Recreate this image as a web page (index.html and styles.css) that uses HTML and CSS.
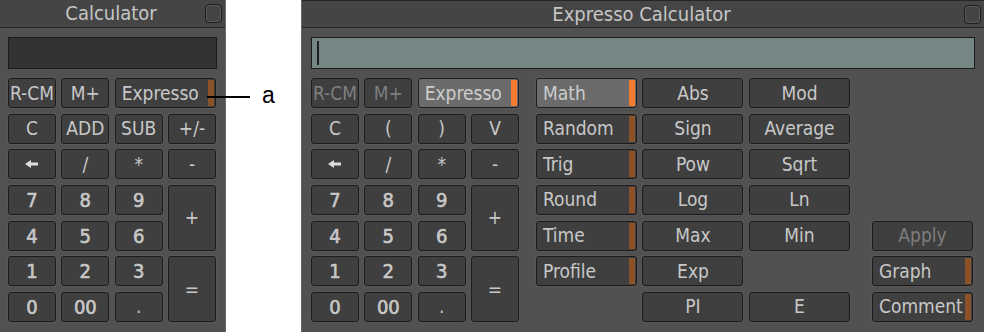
FILE: index.html
```html
<!DOCTYPE html>
<html>
<head>
<meta charset="utf-8">
<link rel="stylesheet" href="styles.css">
</head>
<body>
<div class="page">
  <section class="panel panel-small">
    <header class="titlebar">
      <span></span>
      <span class="title">Calculator</span>
      <span class="closebox"></span>
    </header>
    <div class="body">
      <div class="display display-dark"></div>
      <div class="keypad">
        <div class="btn">R-CM</div>
        <div class="btn">M+</div>
        <div class="btn span2 left strip">Expresso</div>
        <div class="btn">C</div>
        <div class="btn">ADD</div>
        <div class="btn">SUB</div>
        <div class="btn">+/-</div>
        <div class="btn"><svg class="arrow" width="14" height="8" viewBox="0 0 14 8"><path d="M0 4 L6 0 L6 2.4 L13 2.4 L13 5.6 L6 5.6 L6 8 Z"/></svg></div>
        <div class="btn">/</div>
        <div class="btn">*</div>
        <div class="btn">-</div>
        <div class="btn num">7</div>
        <div class="btn num">8</div>
        <div class="btn num">9</div>
        <div class="btn tall">+</div>
        <div class="btn num">4</div>
        <div class="btn num">5</div>
        <div class="btn num">6</div>
        <div class="btn num">1</div>
        <div class="btn num">2</div>
        <div class="btn num">3</div>
        <div class="btn tall">=</div>
        <div class="btn num">0</div>
        <div class="btn num">00</div>
        <div class="btn">.</div>
      </div>
    </div>
  </section>

  <section class="panel panel-large">
    <header class="titlebar">
      <span></span>
      <span class="title">Expresso Calculator</span>
      <span class="closebox"></span>
    </header>
    <div class="body">
      <div class="display display-teal"><span class="cursor"></span></div>
      <div class="controls">
        <div class="keypad">
          <div class="btn disabled">R-CM</div>
          <div class="btn disabled">M+</div>
          <div class="btn span2 left strip active">Expresso</div>
          <div class="btn">C</div>
          <div class="btn">(</div>
          <div class="btn">)</div>
          <div class="btn">V</div>
          <div class="btn"><svg class="arrow" width="14" height="8" viewBox="0 0 14 8"><path d="M0 4 L6 0 L6 2.4 L13 2.4 L13 5.6 L6 5.6 L6 8 Z"/></svg></div>
          <div class="btn">/</div>
          <div class="btn">*</div>
          <div class="btn">-</div>
          <div class="btn num">7</div>
          <div class="btn num">8</div>
          <div class="btn num">9</div>
          <div class="btn tall">+</div>
          <div class="btn num">4</div>
          <div class="btn num">5</div>
          <div class="btn num">6</div>
          <div class="btn num">1</div>
          <div class="btn num">2</div>
          <div class="btn num">3</div>
          <div class="btn tall">=</div>
          <div class="btn num">0</div>
          <div class="btn num">00</div>
          <div class="btn">.</div>
        </div>
        <div class="funcs">
          <div class="btn left strip active">Math</div>
          <div class="btn">Abs</div>
          <div class="btn">Mod</div>
          <div class="btn left strip">Random</div>
          <div class="btn">Sign</div>
          <div class="btn">Average</div>
          <div class="btn left strip">Trig</div>
          <div class="btn">Pow</div>
          <div class="btn">Sqrt</div>
          <div class="btn left strip">Round</div>
          <div class="btn">Log</div>
          <div class="btn">Ln</div>
          <div class="btn left strip">Time</div>
          <div class="btn">Max</div>
          <div class="btn">Min</div>
          <div class="btn left strip">Profile</div>
          <div class="btn">Exp</div>
          <div class="empty"></div>
          <div class="empty"></div>
          <div class="btn">PI</div>
          <div class="btn">E</div>
        </div>
        <div class="side">
          <div class="btn disabled row5">Apply</div>
          <div class="btn left strip row6">Graph</div>
          <div class="btn left strip row7">Comment</div>
        </div>
      </div>
    </div>
  </section>

  <div class="callout">
    <span class="callout-line"></span>
    <span class="callout-label">a</span>
  </div>
</div>
</body>
</html>
```

FILE: styles.css
```css
html, body {
  margin: 0;
  padding: 0;
  background: #ffffff;
}

.page {
  position: relative;
  display: flex;
  align-items: flex-start;
  width: 984px;
  height: 332px;
  overflow: hidden;
}

.panel {
  height: 332px;
  background: #515151;
  font-family: "DejaVu Sans Condensed", "DejaVu Sans", sans-serif;
  color: #c8c8c8;
  box-sizing: border-box;
}

.panel-small {
  width: 226px;
  border-right: 1px solid #6c6c6c;
}

.panel-large {
  width: 683px;
  margin-left: 75px;
  border-left: 1px solid #646464;
}

.titlebar {
  display: grid;
  grid-template-columns: 1fr auto 1fr;
  align-items: center;
  height: 28px;
  box-sizing: border-box;
  background: #454545;
  border-bottom: 1px solid #262626;
  padding-right: 3px;
}

.panel-large .titlebar {
  border-top: 1px solid #262626;
  padding-right: 3px;
}

.title {
  font-size: 20px;
  color: #c6c6c6;
  line-height: 27px;
}

.closebox {
  justify-self: end;
  width: 17px;
  height: 19px;
  box-sizing: border-box;
  border: 1px solid #1e1e1e;
  border-radius: 4px;
  background: #454545;
  box-shadow: inset 0 0 0 1px #5a5a5a;
}

.body {
  padding: 9px 8px 0 8px;
}

.panel-large .body {
  padding: 9px 9px 0 9px;
}

.display {
  height: 32px;
  box-sizing: border-box;
  border: 1px solid #1b1b1b;
  margin-bottom: 9px;
  display: flex;
  align-items: center;
}

.display-dark {
  background: #333333;
}

.display-teal {
  background: #748784;
}

.cursor {
  width: 2px;
  height: 24px;
  margin-left: 5px;
  background: #1e1e1e;
}

.controls {
  display: flex;
  align-items: flex-start;
}

.keypad {
  display: grid;
  grid-template-columns: repeat(4, 48px);
  grid-template-rows: repeat(7, 30px);
  column-gap: 5.33px;
  row-gap: 5.67px;
}

.funcs {
  display: grid;
  grid-template-columns: repeat(3, 101px);
  grid-template-rows: repeat(7, 30px);
  column-gap: 5.5px;
  row-gap: 5.67px;
  margin-left: 17px;
}

.side {
  display: grid;
  grid-template-columns: 101px;
  grid-template-rows: repeat(7, 30px);
  row-gap: 5.67px;
  margin-left: 22px;
}

.row5 { grid-row-start: 5; }
.row6 { grid-row-start: 6; }
.row7 { grid-row-start: 7; }

.btn {
  position: relative;
  display: flex;
  align-items: center;
  justify-content: center;
  box-sizing: border-box;
  background: #3f3f3f;
  border: 1px solid #1c1c1c;
  border-radius: 3px;
  box-shadow: 0 0 0 1px rgba(255, 255, 255, 0.03);
  color: #c8c8c8;
  font-size: 19px;
  line-height: 1;
  white-space: nowrap;
}

.btn.num {
  font-size: 20px;
  -webkit-text-stroke: 0.6px #c8c8c8;
}

.btn.left {
  justify-content: flex-start;
  padding-left: 6px;
}

.btn.disabled {
  color: #7e7e7e;
}

.btn.active {
  background: #6b6b6b;
  color: #cdcdcd;
}

.btn.strip::after {
  content: "";
  position: absolute;
  top: 1px;
  bottom: 1px;
  right: 1px;
  width: 6px;
  background: #8b5128;
}

.btn.active.strip::after {
  background: #f57b30;
}

.span2 {
  grid-column: span 2;
}

.tall {
  grid-row: span 2;
}

.arrow path {
  fill: #dcdcdc;
}

.callout {
  position: absolute;
  left: 207px;
  top: 82px;
  display: flex;
  align-items: center;
}

.callout-line {
  width: 43px;
  height: 2px;
  background: #000000;
}

.callout-label {
  margin-left: 12px;
  font-family: "Liberation Sans", Arial, sans-serif;
  font-size: 23px;
  line-height: 26px;
  color: #000000;
  padding-bottom: 4px;
}
```
